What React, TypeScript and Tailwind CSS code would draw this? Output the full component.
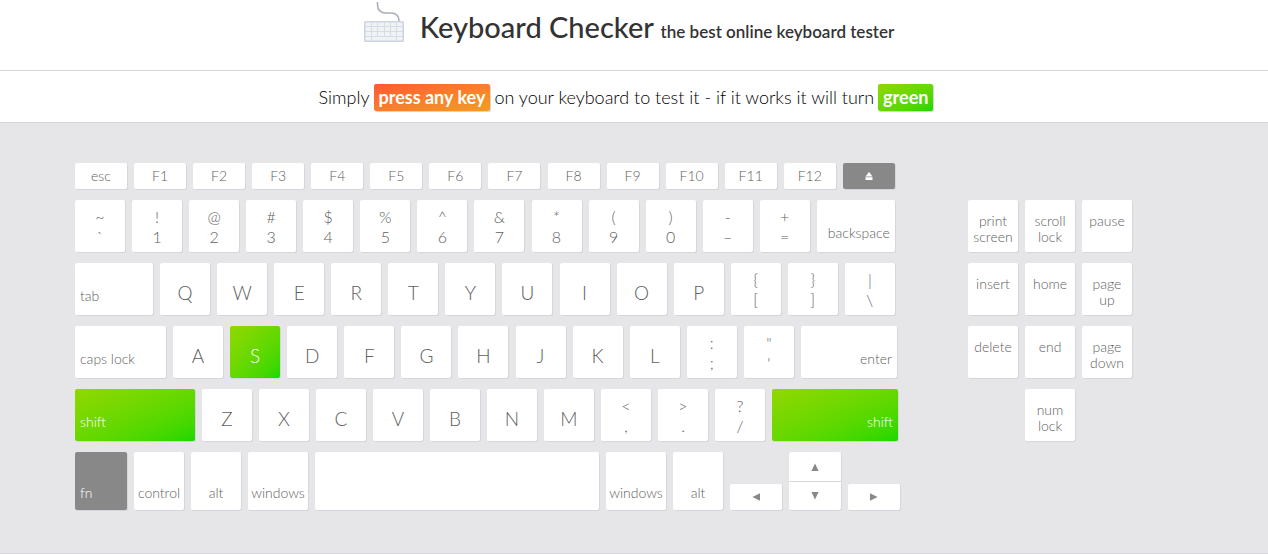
import { useEffect, useState } from "react";
import type { ReactNode } from "react";
import clsx from "clsx";

type Align = "small" | "dual" | "letter" | "left" | "center" | "right" | "nav" | "arrow" | "modifier";

interface KeyDef {
  id: string;
  label: ReactNode;
  name?: string;
  align: Align;
  size?: string;
  disabled?: boolean;
}

const alignClass: Record<Align, string> = {
  small: "items-center justify-center text-[14px] leading-4",
  dual: "items-center justify-center pt-0.5 text-[16px] leading-5",
  letter: "items-end justify-center pb-3 text-[19px] leading-5",
  left: "items-end justify-start px-[5px] pb-[11px] text-[14px] leading-4",
  center: "items-end justify-center pb-[9px] text-[14px] leading-4",
  right: "items-end justify-end px-[5px] pb-[11px] text-[14px] leading-4",
  nav: "items-start justify-center pt-[13px] text-[14px] leading-4",
  arrow: "items-center justify-center text-[11px] leading-4",
  modifier: "items-end justify-start px-[5px] pb-[9px] text-[14px] leading-4",
};

const small = (label: string): KeyDef => ({ id: label, label, align: "small", size: "w-[52px] h-[26px]" });
const letter = (label: string): KeyDef => ({ id: "Key" + label, label, align: "letter" });
const dual = (id: string, top: string, bottom: string): KeyDef => ({
  id,
  label: (
    <>
      {top}
      <br />
      {bottom}
    </>
  ),
  align: "dual",
});
const nav = (id: string, top: string, bottom?: string): KeyDef => ({
  id,
  label: (
    <>
      {top}
      {bottom && <br />}
      {bottom}
    </>
  ),
  align: "nav",
});

const functionRow: KeyDef[] = [
  { ...small("esc"), id: "Escape" },
  ...["F1", "F2", "F3", "F4", "F5", "F6", "F7", "F8", "F9", "F10", "F11", "F12"].map(small),
  {
    id: "Eject",
    name: "eject",
    label: (
      <svg width="8" height="8" viewBox="0 0 8 8" fill="currentColor" aria-hidden="true">
        <path d="M4 0 7.6 4.5H.4z" />
        <path d="M.5 5.2h7V8h-7z" />
      </svg>
    ),
    align: "small",
    size: "w-[52px] h-[26px]",
    disabled: true,
  },
];

const numberRow: KeyDef[] = [
  dual("Backquote", "~", "`"),
  dual("Digit1", "!", "1"),
  dual("Digit2", "@", "2"),
  dual("Digit3", "#", "3"),
  dual("Digit4", "$", "4"),
  dual("Digit5", "%", "5"),
  dual("Digit6", "^", "6"),
  dual("Digit7", "&", "7"),
  dual("Digit8", "*", "8"),
  dual("Digit9", "(", "9"),
  dual("Digit0", ")", "0"),
  dual("Minus", "-", "–"),
  dual("Equal", "+", "="),
  { id: "Backspace", label: "backspace", align: "right", size: "w-[78px] h-[52px]" },
];

const topRow: KeyDef[] = [
  { id: "Tab", label: "tab", align: "left", size: "w-[78px] h-[52px]" },
  ..."QWERTYUIOP".split("").map(letter),
  dual("BracketLeft", "{", "["),
  dual("BracketRight", "}", "]"),
  dual("Backslash", "|", "\\"),
];

const homeRow: KeyDef[] = [
  { id: "CapsLock", label: "caps lock", align: "left", size: "w-[91px] h-[52px]" },
  ..."ASDFGHJKL".split("").map(letter),
  dual("Semicolon", ":", ";"),
  dual("Quote", "\"", "'"),
  { id: "Enter", label: "enter", align: "right", size: "w-[96px] h-[52px]" },
];

const shiftRow: KeyDef[] = [
  { id: "ShiftLeft", label: "shift", align: "left", size: "w-[120px] h-[52px]" },
  ..."ZXCVBNM".split("").map(letter),
  dual("Comma", "<", ","),
  dual("Period", ">", "."),
  dual("Slash", "?", "/"),
  { id: "ShiftRight", label: "shift", align: "right", size: "w-[126px] h-[52px]" },
];

const bottomRow: KeyDef[] = [
  { id: "Fn", label: "fn", align: "modifier", size: "w-[52px] h-[58px]", disabled: true },
  { id: "ControlLeft", label: "control", align: "center", size: "w-[50px] h-[58px]" },
  { id: "AltLeft", label: "alt", align: "center", size: "w-[50px] h-[58px]" },
  { id: "MetaLeft", label: "windows", align: "center", size: "w-[60px] h-[58px]" },
  { id: "Space", label: "", name: "space", align: "center", size: "w-[284px] h-[58px]" },
  { id: "MetaRight", label: "windows", align: "center", size: "w-[60px] h-[58px]" },
  { id: "AltRight", label: "alt", align: "center", size: "w-[50px] h-[58px]" },
];

const arrow = (id: string, name: string, path: string, size: string): KeyDef => ({
  id,
  name,
  label: (
    <svg width="8" height="8" viewBox="0 0 8 8" fill="currentColor" aria-hidden="true">
      <path d={path} />
    </svg>
  ),
  align: "arrow",
  size,
});

const arrowLeft = arrow("ArrowLeft", "left", "M8 .2v7.6L.4 4z", "w-[52px] h-[26px]");
const arrowUp = arrow("ArrowUp", "up", "M4 .4 7.6 8H.4z", "w-[52px] h-[29px]");
const arrowDown = arrow("ArrowDown", "down", "M4 7.6.4 0h7.2z", "w-[52px] h-[28px]");
const arrowRight = arrow("ArrowRight", "right", "M0 .2v7.6L7.6 4z", "w-[52px] h-[26px]");

const navKeys: KeyDef[] = [
  nav("PrintScreen", "print", "screen"),
  nav("ScrollLock", "scroll", "lock"),
  nav("Pause", "pause"),
  nav("Insert", "insert"),
  nav("Home", "home"),
  nav("PageUp", "page", "up"),
  nav("Delete", "delete"),
  nav("End", "end"),
  nav("PageDown", "page", "down"),
];

function Logo() {
  return (
    <svg className="h-[42px] w-10 shrink-0" viewBox="0 0 40 42" fill="none" aria-hidden="true">
      <path d="M13.5 2v2.5q0 8.5 8.5 8.5h4.500q8.500 0 8.500 8" stroke="#a9afba" strokeWidth="1.6" />
      <rect x=".8" y="21.8" width="38.4" height="19.4" rx=".8" fill="#f1f2f4" stroke="#ccd5e2" strokeWidth="1.6" />
      <path
        d="M1 26.5h38M1 31.5h38M1 36.5h38M7.5 22v19M13.5 22v14M20.5 22v14M26.5 22v14M32.5 22v19"
        stroke="#d5dce7"
        strokeWidth="1"
      />
    </svg>
  );
}

export default function App() {
  const [tested, setTested] = useState<string[]>(["KeyS", "ShiftLeft", "ShiftRight"]);
  const mark = (id: string) => setTested((ids) => (ids.includes(id) ? ids : [...ids, id]));

  useEffect(() => {
    const onKeyDown = (event: KeyboardEvent) => mark(event.code);
    window.addEventListener("keydown", onKeyDown);
    return () => window.removeEventListener("keydown", onKeyDown);
  }, []);

  const renderKey = (item: KeyDef, rounding = "rounded-[2px]") => (
    <button
      key={item.id}
      type="button"
      aria-label={item.name}
      disabled={item.disabled}
      onClick={() => mark(item.id)}
      className={clsx(
        "flex shrink-0 text-center whitespace-nowrap shadow-[1px_1px_0_#d5d5dc]",
        rounding,
        item.size ?? "h-[52px] w-[50px]",
        alignClass[item.align],
        item.disabled
          ? "bg-[#888888] text-white"
          : tested.includes(item.id)
            ? "bg-linear-to-br from-[#90d800] to-[#14d800] text-white"
            : item.align === "arrow"
              ? "bg-white text-[#888888]"
              : "bg-white text-[#606060]",
      )}
    >
      <span>{item.label}</span>
    </button>
  );

  return (
    <div className="bg-white font-['Lato',sans-serif] text-black">
      <header className="flex h-[71px] items-start justify-center gap-4 border-b border-[#d5d5dc] pr-[10px]">
        <Logo />
        <h1 className="pt-[7px] text-[29px] leading-10 font-medium text-[#333333]">
          Keyboard Checker <small className="text-[17px] font-semibold">the best online keyboard tester</small>
        </h1>
      </header>

      <p className="flex h-[52px] items-center justify-center gap-1 border-b border-[#d5d5dc] pt-0.5 pr-4 text-[18px] leading-[27px] font-light">
        Simply
        <strong className="rounded-[2px] bg-linear-to-br from-[#ff5733] to-[#f39c1f] px-[5px] font-bold text-white shadow-[1px_1px_0_#d5d5dc]">
          press any key
        </strong>
        on your keyboard to test it - if it works it will turn
        <strong className="rounded-[2px] bg-linear-to-br from-[#90d800] to-[#14d800] px-[5px] font-bold text-white shadow-[1px_1px_0_#d5d5dc]">
          green
        </strong>
      </p>

      <main className="border-b border-[#d5d5dc] bg-[#e6e6e8] pt-10 pb-[43px] font-light">
        <div className="mx-auto flex max-w-[1118px] gap-[68px]">
          <section aria-label="Main keys" className="flex w-[825px] shrink-0 flex-col gap-[11px]">
            <div className="flex w-[820px] justify-between">{functionRow.map((item) => renderKey(item))}</div>
            <div className="flex w-[820px] justify-between">{numberRow.map((item) => renderKey(item))}</div>
            <div className="flex w-[820px] justify-between">{topRow.map((item) => renderKey(item))}</div>
            <div className="flex w-[822px] justify-between">{homeRow.map((item) => renderKey(item))}</div>
            <div className="flex w-[823px] justify-between">{shiftRow.map((item) => renderKey(item))}</div>
            <div className="flex items-end gap-[7px]">
              {bottomRow.map((item) => renderKey(item))}
              {renderKey(arrowLeft)}
              <div className="flex flex-col gap-px">
                {renderKey(arrowUp, "rounded-t-[2px]")}
                {renderKey(arrowDown, "rounded-b-[2px]")}
              </div>
              {renderKey(arrowRight)}
            </div>
          </section>

          <section aria-label="Navigation keys" className="flex flex-col items-center gap-[11px] pt-[37px]">
            <div className="grid grid-cols-3 gap-x-[7px] gap-y-[11px]">{navKeys.map((item) => renderKey(item))}</div>
            {renderKey(nav("NumLock", "num", "lock"))}
          </section>
        </div>
      </main>
    </div>
  );
}
